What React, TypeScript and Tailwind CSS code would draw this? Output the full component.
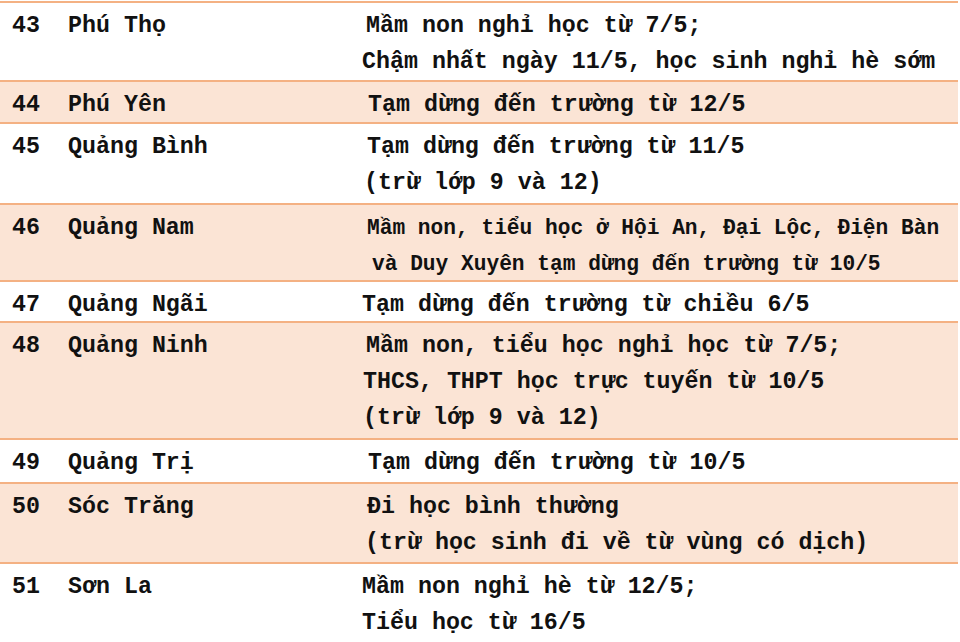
import React, { FC } from "react";

interface Row {
  no: string;
  name: string;
  lines: { text: string; indent: number }[];
  height: string;
  shaded: boolean;
  small?: boolean;
}

const rows: Row[] = [
  {
    no: "43",
    name: "Phú Thọ",
    lines: [
      { text: "Mầm non nghỉ học từ 7/5;", indent: 4 },
      { text: "Chậm nhất ngày 11/5, học sinh nghỉ hè sớm", indent: 0 },
    ],
    height: "h-[79px]",
    shaded: false,
  },
  {
    no: "44",
    name: "Phú Yên",
    lines: [{ text: "Tạm dừng đến trường từ 12/5", indent: 6 }],
    height: "h-[42px]",
    shaded: true,
  },
  {
    no: "45",
    name: "Quảng Bình",
    lines: [
      { text: "Tạm dừng đến trường từ 11/5", indent: 5 },
      { text: "(trừ lớp 9 và 12)", indent: 2 },
    ],
    height: "h-[81px]",
    shaded: false,
  },
  {
    no: "46",
    name: "Quảng Nam",
    lines: [
      { text: "Mầm non, tiểu học ở Hội An, Đại Lộc, Điện Bàn", indent: 5 },
      { text: "và Duy Xuyên tạm dừng đến trường từ 10/5", indent: 10 },
    ],
    height: "h-[77px]",
    shaded: true,
    small: true,
  },
  {
    no: "47",
    name: "Quảng Ngãi",
    lines: [{ text: "Tạm dừng đến trường từ chiều 6/5", indent: 0 }],
    height: "h-[41px]",
    shaded: false,
  },
  {
    no: "48",
    name: "Quảng Ninh",
    lines: [
      { text: "Mầm non, tiểu học nghỉ học từ 7/5;", indent: 4 },
      { text: "THCS, THPT học trực tuyến từ 10/5", indent: 1 },
      { text: "(trừ lớp 9 và 12)", indent: 1 },
    ],
    height: "h-[117px]",
    shaded: true,
  },
  {
    no: "49",
    name: "Quảng Trị",
    lines: [{ text: "Tạm dừng đến trường từ 10/5", indent: 6 }],
    height: "h-[44px]",
    shaded: false,
  },
  {
    no: "50",
    name: "Sóc Trăng",
    lines: [
      { text: "Đi học bình thường", indent: 5 },
      { text: "(trừ học sinh đi về từ vùng có dịch)", indent: 3 },
    ],
    height: "h-[80px]",
    shaded: true,
  },
  {
    no: "51",
    name: "Sơn La",
    lines: [
      { text: "Mầm non nghỉ hè từ 12/5;", indent: 0 },
      { text: "Tiểu học từ 16/5", indent: 0 },
    ],
    height: "h-[80px]",
    shaded: false,
  },
];

const indentClass: Record<number, string> = {
  0: "pl-[0px]",
  1: "pl-[1px]",
  2: "pl-[2px]",
  3: "pl-[3px]",
  4: "pl-[4px]",
  5: "pl-[5px]",
  6: "pl-[6px]",
  10: "pl-[10px]",
};

const App: FC = () => {
  return (
    <main
      className="w-[960px] h-[642px] overflow-hidden bg-white pt-[1px] text-[#111] font-bold"
      style={{ fontFamily: '"Liberation Mono", "DejaVu Sans Mono", monospace' }}
    >
      {rows.map((row) => (
        <div
          key={row.no}
          className={`flex border-t-2 border-[#f4b183] w-[958px] pt-[5px] ${row.height} ${
            row.shaded ? "bg-[#fbe4d5]" : "bg-white"
          }`}
        >
          <div className="w-[68px] shrink-0 pl-[12px] text-[23.3px] leading-[36px]">
            {row.no}
          </div>
          <div className="w-[280px] shrink-0 text-[23.3px] leading-[36px]">
            {row.name}
          </div>
          <div
            className={`flex flex-col pl-[14px] whitespace-pre ${
              row.small ? "text-[21.2px]" : "text-[23.3px]"
            } leading-[36px]`}
          >
            {row.lines.map((line, i) => (
              <span key={i} className={indentClass[line.indent]}>
                {line.text}
              </span>
            ))}
          </div>
        </div>
      ))}
    </main>
  );
};

export default App;
